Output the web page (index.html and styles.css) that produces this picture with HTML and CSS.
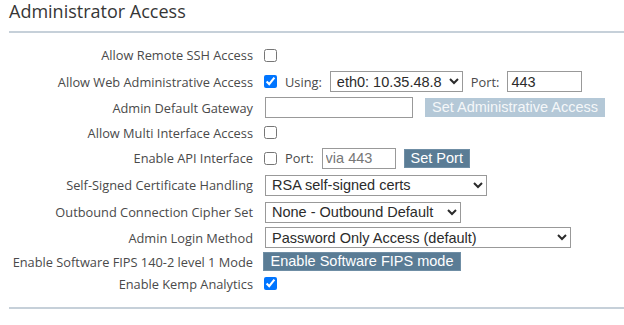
FILE: index.html
```html
<!DOCTYPE html>
<html lang="en">
<head>
  <meta charset="utf-8" />
  <title>Administrator Access</title>
  <link rel="stylesheet" href="styles.css">
</head>
<body>
  <div class="panel">
    <h1 class="panel-title">Administrator Access</h1>
    <div class="settings">
      <label class="lbl">Allow Remote SSH Access</label>
      <div class="ctl"><input type="checkbox" class="chk" /></div>

      <label class="lbl">Allow Web Administrative Access</label>
      <div class="ctl">
        <input type="checkbox" class="chk" checked />
        <span class="inline-lbl">Using:</span>
        <select class="sel sel-iface"><option>eth0: 10.35.48.8</option></select>
        <span class="inline-lbl">Port:</span>
        <input type="text" class="txt txt-port" value="443" />
      </div>

      <label class="lbl">Admin Default Gateway</label>
      <div class="ctl ctl-wide">
        <input type="text" class="txt txt-gw" />
        <button class="btn" disabled>Set Administrative Access</button>
      </div>

      <label class="lbl">Allow Multi Interface Access</label>
      <div class="ctl"><input type="checkbox" class="chk" /></div>

      <label class="lbl">Enable API Interface</label>
      <div class="ctl">
        <input type="checkbox" class="chk" />
        <span class="inline-lbl">Port:</span>
        <input type="text" class="txt txt-api" placeholder="via 443" />
        <button class="btn">Set Port</button>
      </div>

      <label class="lbl">Self-Signed Certificate Handling</label>
      <div class="ctl"><select class="sel sel-cert"><option>RSA self-signed certs</option></select></div>

      <label class="lbl">Outbound Connection Cipher Set</label>
      <div class="ctl"><select class="sel sel-cipher"><option>None - Outbound Default</option></select></div>

      <label class="lbl">Admin Login Method</label>
      <div class="ctl"><select class="sel sel-login"><option>Password Only Access (default)</option></select></div>

      <label class="lbl">Enable Software FIPS 140-2 level 1 Mode</label>
      <div class="ctl"><button class="btn btn-fips">Enable Software FIPS mode</button></div>

      <label class="lbl">Enable Kemp Analytics</label>
      <div class="ctl"><input type="checkbox" class="chk" checked /></div>
    </div>
    <hr class="rule rule-bottom" />
  </div>
</body>
</html>
```

FILE: styles.css
```css
:root {
  --text: #333;
  --label: #4a4a4a;
  --rule: #c6d0d9;
  --btn: #5a7c95;
  --btn-off: #b4c8d7;
}
html, body {
  margin: 0;
  padding: 0;
  background: #fff;
  color: var(--text);
  font-family: 'Open Sans', 'Noto Sans', sans-serif;
}
.panel {
  padding: 0 0 0 9px;
}
.panel-title {
  font-size: 18px;
  font-weight: 400;
  line-height: 22px;
  margin: 0;
  padding: 0 0 9px 0;
  color: #363636;
  border-bottom: 2px solid var(--rule);
}
.settings {
  display: grid;
  grid-template-columns: 244px 1fr;
  grid-template-rows: 26px 27px 25px 25px 26px 28px 26px 25px 23px 21px;
  column-gap: 11px;
  align-items: center;
  margin-top: 9px;
}
.lbl {
  text-align: right;
  font-size: 12.8px;
  color: var(--label);
  white-space: nowrap;
}
.ctl {
  display: flex;
  align-items: center;
  gap: 8px;
}
.ctl-wide {
  gap: 12px;
}
.chk {
  width: 13px;
  height: 13px;
  margin: 0;
}
.inline-lbl {
  font-size: 12.8px;
  color: var(--label);
}
.sel, .txt {
  font-family: 'Liberation Sans', Arial, sans-serif;
  font-size: 14.5px;
  color: #2b2b2b;
  height: 21px;
  box-sizing: border-box;
  border: 1px solid #999;
  border-radius: 0;
  background: #fff;
  margin: 0;
}
.sel {
  padding: 0 2px;
}
.txt {
  padding: 0 3px;
}
.txt::placeholder {
  color: #777;
}
.sel-iface { width: 133px; }
.sel-cert { width: 222px; margin-left: 1px; }
.sel-cipher { width: 196px; margin-left: 1px; }
.sel-login { width: 306px; margin-left: 1px; }
.txt-port { width: 75px; }
.txt-gw { width: 148px; margin-left: 1px; }
.txt-api { width: 74px; }
.btn {
  font-family: 'Liberation Sans', Arial, sans-serif;
  font-size: 14.5px;
  color: #fff;
  background: var(--btn);
  border: 1px solid #6f8ea5;
  border-radius: 0;
  height: 19px;
  padding: 0 6px;
  line-height: 17px;
  margin: 0;
}
.btn:disabled {
  background: var(--btn-off);
  border-color: var(--btn-off);
  color: #f4f7f9;
}
.btn-fips {
  width: 198px;
  margin-left: -1px;
}
.rule {
  border: 0;
  border-top: 2px solid var(--rule);
  margin: 13px 0 0 0;
}
```
